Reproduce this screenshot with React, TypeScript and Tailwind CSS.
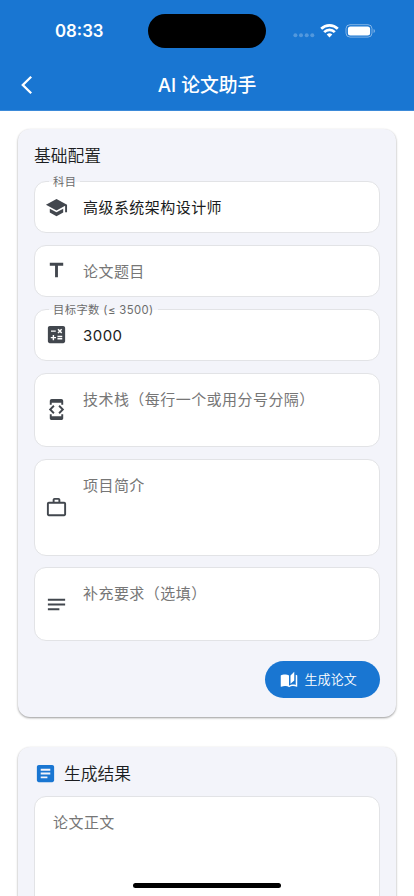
import type { ReactNode } from "react";
import {
  MdArticle,
  MdAutoStories,
  MdCalculate,
  MdDeveloperMode,
  MdNotes,
  MdOutlineWorkOutline,
  MdSchool,
  MdTitle,
} from "react-icons/md";

type FieldProps = {
  icon?: ReactNode;
  label?: string;
  value?: string;
  placeholder?: string;
  className: string;
};

const StatusBar = () => (
  <div className="flex h-[61px] items-center">
    <div className="w-[148px] pt-[2px] pl-[55px] text-[16.8px] leading-none font-semibold">08:33</div>
    <div className="h-[34px] w-[118px] rounded-full bg-black" />
    <div className="flex flex-1 items-center pl-[27px]">
      <svg width="22" height="14" viewBox="0 0 22 14" fill="#fff" fillOpacity="0.25">
        <circle cx="2.4" cy="11.3" r="2" />
        <circle cx="8" cy="11.3" r="2" />
        <circle cx="13.7" cy="11.3" r="2" />
        <circle cx="19.3" cy="11.3" r="2" />
      </svg>
      <svg className="ml-[5px]" width="19" height="14" viewBox="0 0 19 14" fill="none" stroke="#fff" strokeWidth="2.7">
        <path d="M1.2 4.8a11.8 11.8 0 0 1 16.6 0" />
        <path d="M4.2 8.1a7.4 7.4 0 0 1 10.6 0" />
        <path d="M9.5 13.4 6.7 10.6a4 4 0 0 1 5.6 0z" fill="#fff" stroke="none" />
      </svg>
      <svg className="ml-[6px]" width="31" height="14" viewBox="0 0 31 14" fill="none">
        <rect x="1" y="0.7" width="26" height="12.4" rx="4" stroke="#fff" strokeOpacity="0.45" />
        <rect x="2.9" y="2.5" width="22.2" height="8.9" rx="2.5" fill="#fff" />
        <path d="M28.6 5v4q1.3-.6 1.3-2t-1.3-2z" fill="#fff" fillOpacity="0.5" />
      </svg>
    </div>
  </div>
);

const Field = ({ icon, label, value, placeholder, className }: FieldProps) => (
  <div className={`relative flex rounded-[12px] border border-[#e2e3e6] bg-white ${className}`}>
    {label && (
      <span className="absolute -top-[8px] left-[14px] bg-gradient-to-b from-[#f3f4fa] from-45% to-white to-45% px-[4px] text-[11.3px] leading-[17px] font-[390] tracking-[0.4px] text-[#6c6c6c]">
        {label}
      </span>
    )}
    {icon && <div className="flex w-[48px] items-center pl-[10px] text-[23px] text-[#42474e]">{icon}</div>}
    <div className={`pt-[14px] text-[15px] leading-6 tracking-[0.45px] ${icon ? "" : "pl-[18px]"}`}>
      {value ? (
        <span className="font-[390] text-[#1a1c20]">{value}</span>
      ) : (
        <span className="font-[390] text-[#767676]">{placeholder}</span>
      )}
    </div>
  </div>
);

const App = () => {
  return (
    <div className="h-[896px] overflow-hidden bg-white font-['Inter','Noto_Sans_CJK_SC',sans-serif] text-[#1a1c20]">
      <header className="h-[111px] border-b border-[#3b8ad9] bg-[#1976d2] text-white">
        <StatusBar />
        <div className="grid h-[49px] grid-cols-[60px_1fr_60px] items-center">
          <svg className="-mt-px ml-[20px]" width="14" height="20" viewBox="0 0 14 20" fill="none" stroke="#fff" strokeWidth="2.3">
            <path d="M11.2 1.7 2.8 10l8.4 8.3" />
          </svg>
          <h1 className="pt-[2px] text-center text-[18.8px] leading-none font-medium">AI 论文助手</h1>
        </div>
      </header>

      <main className="flex flex-col gap-[30px] px-[18px] pt-[18px]">
        <section className="h-[588px] rounded-[12px] bg-[#f3f4fa] px-4 pt-[14px] shadow-[0_1px_2px_rgba(0,0,0,0.3),0_1px_3px_rgba(0,0,0,0.12)]">
          <h2 className="h-[38px] text-[16.8px] leading-[26px] font-[350]">基础配置</h2>
          <div className="flex flex-col gap-[11.7px]">
            <Field className="h-[52.2px]" label="科目" value="高级系统架构设计师" icon={<MdSchool />} />
            <Field className="h-[52.2px]" placeholder="论文题目" icon={<MdTitle />} />
            <Field className="h-[52.2px]" label="目标字数 (≤ 3500)" value="3000" icon={<MdCalculate />} />
            <Field className="h-[74.2px]" placeholder="技术栈（每行一个或用分号分隔）" icon={<MdDeveloperMode />} />
            <Field className="h-[97px]" placeholder="项目简介" icon={<MdOutlineWorkOutline />} />
            <Field className="h-[74.2px]" placeholder="补充要求（选填）" icon={<MdNotes />} />
          </div>
          <div className="mt-[19.4px] flex justify-end">
            <button className="flex h-[37.5px] w-[115px] items-center rounded-full bg-[#1976d2] pl-[15px] text-[13px] text-white">
              <MdAutoStories className="mr-[6.5px] text-[18px]" />
              <span className="font-[350] tracking-[0.1px]">生成论文</span>
            </button>
          </div>
        </section>

        <section className="h-[400px] rounded-[12px] bg-[#f3f4fa] px-4 pt-[14px] shadow-[0_1px_2px_rgba(0,0,0,0.3),0_1px_3px_rgba(0,0,0,0.12)]">
          <h2 className="flex h-[35px] items-start text-[16.8px] leading-[26px] font-[350]">
            <MdArticle className="mt-px mr-[7px] text-[23px] text-[#1976d2]" />
            生成结果
          </h2>
          <Field className="h-[300px]" placeholder="论文正文" />
        </section>
      </main>

      {/* home indicator */}
      <div className="fixed bottom-[8px] left-1/2 h-[5px] w-[148px] -translate-x-1/2 rounded-full bg-black" />
    </div>
  );
};

export default App;
